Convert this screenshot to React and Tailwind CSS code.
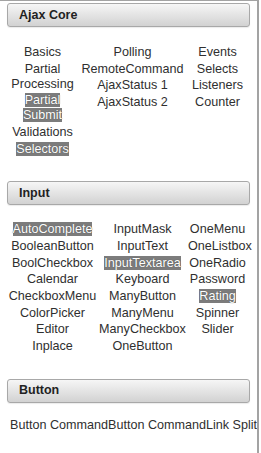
import React from "react";

const Header = ({ title }) => (
  <div className="mx-[7px] h-[24px] rounded-[3px] border border-[#a8a8a8] bg-gradient-to-b from-[#f6f6f6] to-[#d2d2d2] pl-[11px] flex items-center shadow-[0_1px_1px_rgba(0,0,0,0.08)]">
    <span className="font-bold text-[12.5px] text-[#222]">{title}</span>
  </div>
);

const Item = ({ children, hl }) => (
  <div className="leading-[15px] mb-[1.67px] text-center">
    {hl ? (
      <span className="bg-[#7c7c7c] text-white [text-shadow:0_0_1px_#444]">{children}</span>
    ) : (
      <span>{children}</span>
    )}
  </div>
);

const Col = ({ items, w }) => (
  <div style={{ width: w }} className="shrink-0 flex flex-col px-[1px]">
    {items.map((it, i) => (
      <Item key={i} hl={it.hl}>
        {it.t}
      </Item>
    ))}
  </div>
);

const t = (s) => ({ t: s });
const h = (s) => ({ t: s, hl: true });

export default function App() {
  return (
    <div
      className="w-[259px] h-[453px] overflow-hidden border-t border-r-2 border-[#a3a3a3] bg-white text-[12.6px] text-[#2f2f2f]"
      style={{ fontFamily: '"Liberation Sans", Arial, sans-serif' }}
    >
      <div className="pt-[2px]">
        <Header title="Ajax Core" />
        <div className="mx-[7px] mt-[18px] flex">
          <Col
            w={71}
            items={[t("Basics"), t("Partial Processing"), h("Partial Submit"), t("Validations"), h("Selectors")]}
          />
          <Col w={109} items={[t("Polling"), t("RemoteCommand"), t("AjaxStatus 1"), t("AjaxStatus 2")]} />
          <Col w={61} items={[t("Events"), t("Selects"), t("Listeners"), t("Counter")]} />
        </div>
        <div className="mt-[23px]">
          <Header title="Input" />
        </div>
        <div className="mx-[7px] mt-[17px] flex">
          <Col
            w={91}
            items={[
              h("AutoComplete"),
              t("BooleanButton"),
              t("BoolCheckbox"),
              t("Calendar"),
              t("CheckboxMenu"),
              t("ColorPicker"),
              t("Editor"),
              t("Inplace"),
            ]}
          />
          <Col
            w={89}
            items={[
              t("InputMask"),
              t("InputText"),
              h("InputTextarea"),
              t("Keyboard"),
              t("ManyButton"),
              t("ManyMenu"),
              t("ManyCheckbox"),
              t("OneButton"),
            ]}
          />
          <Col
            w={61}
            items={[
              t("OneMenu"),
              t("OneListbox"),
              t("OneRadio"),
              t("Password"),
              h("Rating"),
              t("Spinner"),
              t("Slider"),
            ]}
          />
        </div>
        <div className="mt-[23px]">
          <Header title="Button" />
        </div>
        <div className="mt-[15px] pl-[10px] leading-[15px] whitespace-nowrap">
          Button CommandButton CommandLink SplitButton
        </div>
      </div>
    </div>
  );
}
